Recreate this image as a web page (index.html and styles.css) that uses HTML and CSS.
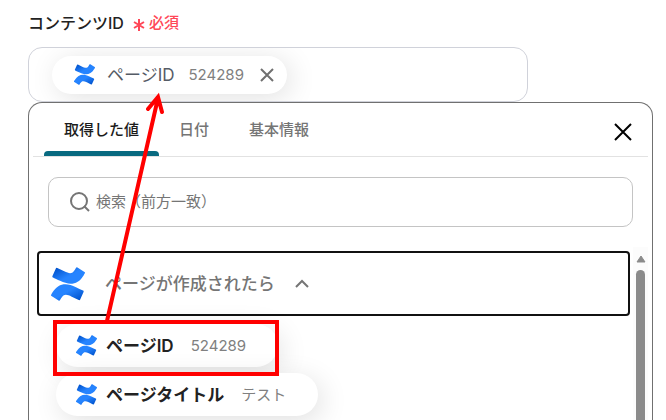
FILE: index.html
```html
<!DOCTYPE html>
<html lang="ja">
<head>
<meta charset="utf-8">
<meta name="viewport" content="width=device-width, initial-scale=1">
<title>コンテンツID</title>
<link rel="stylesheet" href="styles.css">
</head>
<body>
<svg class="defs" aria-hidden="true">
  <defs>
    <linearGradient id="lower" x1="1" y1="1" x2="0.2" y2="0.3">
      <stop offset="0.1" stop-color="#0052cc"/>
      <stop offset="0.7" stop-color="#2684ff"/>
    </linearGradient>
    <linearGradient id="upper" x1="0" y1="0" x2="0.8" y2="0.7">
      <stop offset="0.1" stop-color="#0052cc"/>
      <stop offset="0.7" stop-color="#2684ff"/>
    </linearGradient>
    <symbol id="confluence" viewBox="0 0 24 24">
      <path fill="url(#lower)" d="M.87 18.257c-.248.382-.53.875-.763 1.245a.764.764 0 0 0 .255 1.04l4.965 3.054a.764.764 0 0 0 1.058-.26c.199-.332.454-.763.733-1.221 1.967-3.247 3.945-2.853 7.508-1.146l4.957 2.337a.764.764 0 0 0 1.028-.382l2.364-5.346a.764.764 0 0 0-.382-1 599.851 599.851 0 0 1-4.965-2.361C10.911 10.97 5.224 11.185.87 18.257z"/>
      <path fill="url(#upper)" d="M23.131 5.743c.249-.405.531-.875.764-1.25a.764.764 0 0 0-.256-1.034L18.675.404a.764.764 0 0 0-1.058.26c-.195.335-.451.763-.734 1.225-1.966 3.246-3.945 2.85-7.508 1.146L4.437.694a.764.764 0 0 0-1.027.382L1.046 6.422a.764.764 0 0 0 .382 1c1.039.49 3.105 1.467 4.965 2.361 6.698 3.246 12.392 3.029 16.738-4.04z"/>
    </symbol>
  </defs>
</svg>

<main class="form">
  <div class="label">
    <span>コンテンツID</span>
    <span class="required">
      <svg width="12" height="16" viewBox="0 0 12 16" aria-hidden="true"><path d="M6 4v12M1 7l10 6M11 7L1 13"/></svg>
      必須
    </span>
  </div>

  <div class="field">
    <div class="token">
      <svg class="logo" aria-hidden="true"><use href="#confluence"/></svg>
      <span class="name">ページID</span>
      <span class="value">524289</span>
      <button class="icon-button" type="button" aria-label="削除">
        <svg width="16" height="16" viewBox="0 0 16 16"><path d="M2 2l12 12M14 2L2 14"/></svg>
      </button>
    </div>
  </div>

  <section class="panel">
    <div class="tabs">
      <button class="tab active" type="button">取得した値</button>
      <button class="tab" type="button">日付</button>
      <button class="tab" type="button">基本情報</button>
      <button class="icon-button close" type="button" aria-label="閉じる">
        <svg width="20" height="20" viewBox="0 0 20 20"><path d="M2 2l16 16M18 2L2 18"/></svg>
      </button>
    </div>

    <label class="search">
      <svg width="22" height="22" viewBox="0 0 22 22" aria-hidden="true"><circle cx="10" cy="10" r="8"/><path d="M15 15l5 5"/></svg>
      <input type="text" placeholder="検索（前方一致）" aria-label="検索（前方一致）">
    </label>

    <div class="results">
      <div class="list">
        <button class="group" type="button" aria-expanded="true">
          <svg class="logo large" aria-hidden="true"><use href="#confluence"/></svg>
          <span>ページが作成されたら</span>
          <svg class="chevron" width="14" height="10" viewBox="0 0 14 10" aria-hidden="true"><path d="M1 8l6-6 6 6"/></svg>
        </button>
        <div class="options">
          <button class="option" type="button">
            <svg class="logo" aria-hidden="true"><use href="#confluence"/></svg>
            <span class="name">ページID</span>
            <span class="value">524289</span>
          </button>
          <button class="option" type="button">
            <svg class="logo" aria-hidden="true"><use href="#confluence"/></svg>
            <span class="name">ページタイトル</span>
            <span class="value">テスト</span>
          </button>
        </div>
      </div>
      <div class="scrollbar" aria-hidden="true">
        <svg width="10" height="8" viewBox="0 0 10 8"><path d="M5 1L9 7H1z"/></svg>
        <div class="thumb"></div>
      </div>
    </div>
  </section>
</main>

<svg class="annotation" width="666" height="420" viewBox="0 0 666 420" aria-hidden="true">
  <rect x="55" y="322" width="222" height="52"/>
  <path d="M107 321L158 98M148 109L158 97L162 112"/>
</svg>
</body>
</html>
```

FILE: styles.css
```css
* {
  box-sizing: border-box;
}

body {
  margin: 0;
  height: 100vh;
  overflow: hidden;
  background: #fff;
  color: #222;
  font-family: Inter, "Noto Sans CJK JP", sans-serif;
  font-size: 15px;
  line-height: 24px;
}

button,
input {
  margin: 0;
  padding: 0;
  border: 0;
  background: none;
  color: inherit;
  font: inherit;
}

svg {
  display: block;
  flex: none;
}

.defs {
  position: absolute;
  width: 0;
  height: 0;
}

.form {
  display: flex;
  flex-direction: column;
  height: 100%;
  padding: 11px 13px 0 28px;
}

.label {
  display: flex;
  align-items: center;
  gap: 9px;
  margin-bottom: 12px;
  font-size: 16px;
  font-weight: 500;
}

.required {
  display: flex;
  align-items: center;
  gap: 4px;
  color: #ff4757;
  font-size: 15px;
}

.required svg {
  fill: none;
  stroke: currentColor;
  stroke-width: 2;
}

.field {
  display: flex;
  align-items: center;
  max-width: 500px;
  height: 55px;
  flex: none;
  padding: 0 23px;
  overflow: hidden;
  border: 1px solid #d0d2da;
  border-radius: 14px;
}

.token,
.option {
  display: flex;
  align-items: center;
  border-radius: 22px;
  background: #fff;
}

.token {
  height: 38px;
  padding: 0 12px 0 22px;
  box-shadow: 4px 4px 28px rgba(0, 0, 0, 0.12);
}

.logo {
  width: 21px;
  height: 21px;
}

.name {
  font-size: 17px;
}

.value {
  color: #808080;
}

.token .name {
  margin: 0 14px 0 12px;
  color: #555b66;
}

.icon-button svg {
  fill: none;
  stroke: currentColor;
  stroke-width: 2;
}

.token .icon-button {
  margin-left: 15px;
  color: #707070;
}

.panel {
  display: flex;
  flex-direction: column;
  flex: 1;
  min-height: 0;
  border: 1px solid #707070;
  border-bottom: 0;
  border-radius: 14px 14px 0 0;
  background: #fff;
}

.tabs {
  display: flex;
  align-items: stretch;
  height: 54px;
  flex: none;
  margin: 0 4px;
  padding: 0 15px 0 11px;
  border-bottom: 1px solid #e2e2e2;
}

.tab {
  position: relative;
  padding: 0 20px;
  color: #757575;
  font-weight: 500;
}

.tab.active {
  color: #1c1c1c;
}

.tab.active::after {
  content: "";
  position: absolute;
  right: 0;
  bottom: 0;
  left: 0;
  height: 5px;
  border-radius: 4px 4px 0 0;
  background: #086a80;
}

.close {
  margin-left: auto;
  padding-top: 5px;
  color: #000;
}

.search {
  display: flex;
  align-items: center;
  gap: 5px;
  height: 50px;
  flex: none;
  margin: 20px 19px;
  padding: 0 20px;
  border: 1px solid #c4c4c4;
  border-radius: 10px;
  color: #757575;
}

.search svg {
  fill: none;
  stroke: currentColor;
  stroke-width: 2;
}

.search input {
  flex: 1;
  min-width: 0;
  outline: 0;
}

.search input::placeholder {
  color: #757575;
  opacity: 1;
}

.results {
  display: flex;
  flex: 1;
  min-height: 0;
  gap: 3px;
  padding: 0 4px 0 8px;
}

.list {
  flex: 1;
  min-width: 0;
  padding-top: 4px;
  overflow: hidden;
}

.group {
  display: flex;
  align-items: center;
  width: 100%;
  height: 65px;
  padding: 0 12px;
  border: 2px solid #111;
  border-radius: 4px;
  color: #757575;
  font-size: 17px;
  font-weight: 500;
}

.logo.large {
  width: 34px;
  height: 34px;
  margin-right: 20px;
}

.chevron {
  margin-left: 20px;
  fill: none;
  stroke: currentColor;
  stroke-width: 2;
}

.options {
  display: flex;
  flex-direction: column;
  align-items: flex-start;
  gap: 6px;
  padding: 8px 19px;
}

.option {
  height: 43px;
  padding: 0 32px 0 20px;
  box-shadow: 4px 6px 28px rgba(0, 0, 0, 0.12);
}

.option .name {
  margin: 0 17px 0 9px;
  font-weight: 600;
}

.scrollbar {
  display: flex;
  flex-direction: column;
  align-items: center;
  gap: 7px;
  width: 15px;
  padding-top: 8px;
  background: #fcfcfc;
}

.scrollbar svg {
  fill: #8b8b8b;
  stroke: #8b8b8b;
  stroke-linejoin: round;
}

.thumb {
  width: 9px;
  flex: 1;
  border-radius: 5px 5px 0 0;
  background: #8b8b8b;
}

.annotation {
  position: absolute;
  top: 0;
  left: 0;
  fill: none;
  stroke: #f00;
  stroke-width: 4;
  stroke-linecap: round;
  pointer-events: none;
}
```
